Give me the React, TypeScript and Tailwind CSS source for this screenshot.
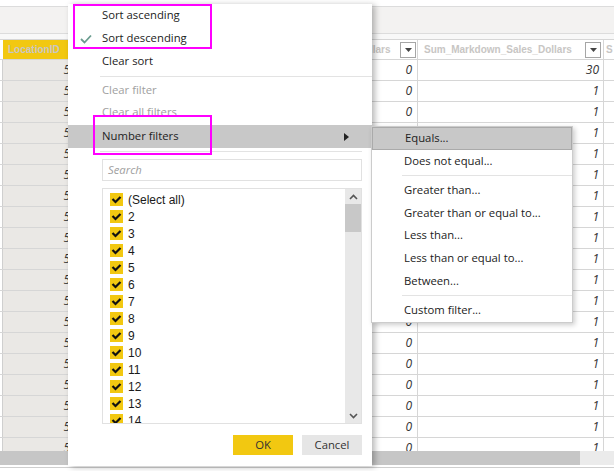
import React from "react";

const ROWS = Array.from({ length: 19 }, (_, i) => i);
const VALUES = ["(Select all)", "2", "3", "4", "5", "6", "7", "8", "9", "10", "11", "12", "13", "14"];

function DropBox() {
  return (
    <div className="w-[16px] h-[16px] border border-[#a6a6a6] bg-white flex items-center justify-center">
      <svg width="7" height="4" viewBox="0 0 7 4">
        <path d="M0 0 L7 0 L3.5 4 Z" fill="#444" />
      </svg>
    </div>
  );
}

function Check() {
  return (
    <div className="w-[13px] h-[13px] bg-[#f2c811] flex items-center justify-center">
      <svg width="11" height="9" viewBox="0 0 11 9">
        <path d="M1.5 4 L4.5 7 L9.5 2" stroke="#111" strokeWidth="2.2" fill="none" />
      </svg>
    </div>
  );
}

function Table() {
  return (
    <div className="flex flex-col">
      <div className="h-[7px] bg-white border-b border-[#dcdcdc]" />
      <div className="h-[27px] bg-[#f3f2f1] border-b border-[#dcdcdc]" />
      <div className="h-[5px] bg-[#f8f8f8]" />
      {/* header */}
      <div className="flex h-[21px] border-t border-b border-[#d6d6d6] font-['Liberation_Sans',Arial,sans-serif] text-[10px] font-bold text-[#c8c6c4]">
        <div className="w-[72px] flex items-center pl-[3px]">
          <div className="w-full h-full bg-[#f2c811] flex items-center pl-[5px]">LocationID</div>
        </div>
        <div className="w-[300px]" />
        <div className="w-[46px] flex items-center justify-between pr-[1px] border-r border-[#d6d6d6]">
          <span className="ml-[-2px]">llars</span>
          <DropBox />
        </div>
        <div className="w-[186px] flex items-center justify-between pl-[6px] pr-[2px] border-r border-[#d6d6d6]">
          <span>Sum_Markdown_Sales_Dollars</span>
          <DropBox />
        </div>
        <div className="flex-1 pl-[2px] flex items-center">S</div>
      </div>
      {/* body rows */}
      <div className="h-[391px] overflow-hidden flex flex-col font-['Open_Sans',sans-serif] text-[12px] italic text-[#333]">
        {ROWS.map((i) => (
          <div key={i} className="flex h-[21px] shrink-0 border-b border-[#d6d6d6]">
            <div className="w-[72px] pl-[2px]">
              <div className="h-full border-l border-[#cfcfcf] bg-[#eae8e5] text-right pr-[2px] leading-[20px]">5</div>
            </div>
            <div className="w-[300px]" />
            <div className="w-[46px] border-r border-[#d6d6d6] text-right pr-[5px] leading-[20px]">0</div>
            <div className="w-[186px] border-r border-[#d6d6d6] text-right pr-[4px] leading-[20px]">{i === 0 ? "30" : "1"}</div>
            <div className="flex-1" />
          </div>
        ))}
      </div>
      <div className="flex h-[14px]">
        <div className="w-[580px] bg-[#c6c6c6]" />
        <div className="flex-1 bg-[#ebebeb]" />
      </div>
      <div className="h-[3px] bg-white border-b border-[#cfcfcf]" />
    </div>
  );
}

function MenuItem({ label, disabled, active, check }: { label: string; disabled?: boolean; active?: boolean; check?: boolean }) {
  return (
    <div
      className={
        "h-[23px] flex items-center pl-[34px] relative " +
        (active ? "bg-[#c8c8c8] " : "") +
        (disabled ? "text-[#a0a0a0]" : "text-[#222]")
      }
    >
      {check && (
        <svg className="absolute left-[12px] top-[7px]" width="12" height="10" viewBox="0 0 12 10">
          <path d="M1 5 L4.5 8.5 L11 1.5" stroke="#6a9c8f" strokeWidth="1.8" fill="none" />
        </svg>
      )}
      {label}
      {active && (
        <svg className="absolute left-[276px] top-[8px]" width="5" height="8" viewBox="0 0 5 8">
          <path d="M0 0 L5 4 L0 8 Z" fill="#222" />
        </svg>
      )}
    </div>
  );
}

function Menu() {
  return (
    <div className="absolute left-[68px] top-[4px] w-[304px] h-[462px] bg-white shadow-[3px_1px_6px_rgba(0,0,0,0.28)] flex flex-col font-['Open_Sans',sans-serif] text-[11.3px]">
      <MenuItem label="Sort ascending" />
      <MenuItem label="Sort descending" check />
      <MenuItem label="Clear sort" />
      <div className="mt-[3px] mb-[2px] ml-[32px] h-px bg-[#e3e3e3]" />
      <div className="h-[22px] flex items-center pl-[34px] text-[#a0a0a0]">Clear filter</div>
      <div className="h-[22px] flex items-center pl-[34px] text-[#a0a0a0]">Clear all filters</div>
      <div className="mt-[2px]">
        <MenuItem label="Number filters" active />
      </div>
      <div className="mt-[3px] ml-[32px] mr-[10px] h-px bg-[#e3e3e3]" />
      <div className="mt-[7px] ml-[34px] w-[260px] h-[22px] border border-[#e1e1e1] flex items-center pl-[5px] italic text-[#a0a0a0]">
        Search
      </div>
      <div className="mt-[7px] ml-[34px] w-[260px] h-[236px] border border-[#e1e1e1] flex overflow-hidden">
        <div className="flex-1 pt-[2px] pl-[7px] font-['Liberation_Sans',Arial,sans-serif] text-[12px] text-[#1a1a1a] overflow-hidden">
          {VALUES.map((v) => (
            <div key={v} className="h-[17px] flex items-center gap-[5px] shrink-0">
              <Check />
              <span>{v}</span>
            </div>
          ))}
        </div>
        <div className="w-[16px] bg-[#e8e8e8] flex flex-col items-center">
          <svg className="mt-[5px]" width="9" height="6" viewBox="0 0 9 6">
            <path d="M1 5 L4.5 1.5 L8 5" stroke="#555" strokeWidth="1.6" fill="none" />
          </svg>
          <div className="mt-[4px] w-full h-[28px] bg-[#c8c8c8]" />
          <div className="flex-1" />
          <svg className="mb-[4px]" width="9" height="6" viewBox="0 0 9 6">
            <path d="M1 1 L4.5 4.5 L8 1" stroke="#555" strokeWidth="1.6" fill="none" />
          </svg>
        </div>
      </div>
      <div className="mt-[11px] ml-[165px] flex gap-[9px]">
        <div className="w-[60px] h-[20px] bg-[#f2c811] flex items-center justify-center text-[#333]">OK</div>
        <div className="w-[60px] h-[20px] bg-[#e6e6e6] flex items-center justify-center text-[#333]">Cancel</div>
      </div>
    </div>
  );
}

function SubItem({ label, active }: { label: string; active?: boolean }) {
  return (
    <div
      className={
        "h-[23px] flex items-center pl-[32px] text-[#222] " +
        (active ? "bg-[#c8c8c8] border border-[#aaaaaa] pl-[31px]" : "")
      }
    >
      {label}
    </div>
  );
}

function SubMenu() {
  return (
    <div className="absolute left-[371px] top-[126px] w-[202px] h-[197px] bg-white border border-[#cccccc] shadow-[2px_2px_5px_rgba(0,0,0,0.2)] flex flex-col font-['Open_Sans',sans-serif] text-[11.3px]">
      <SubItem label="Equals..." active />
      <SubItem label="Does not equal..." />
      <div className="my-[3px] ml-[30px] h-px bg-[#e3e3e3]" />
      <SubItem label="Greater than..." />
      <SubItem label="Greater than or equal to..." />
      <SubItem label="Less than..." />
      <SubItem label="Less than or equal to..." />
      <SubItem label="Between..." />
      <div className="my-[3px] ml-[30px] h-px bg-[#e3e3e3]" />
      <SubItem label="Custom filter..." />
    </div>
  );
}

export default function App() {
  return (
    <div className="relative w-[614px] h-[471px] overflow-hidden bg-white">
      <Table />
      <Menu />
      <SubMenu />
      <div className="absolute left-[73px] top-[4px] w-[139px] h-[45px] border-2 border-[#ff00ff]" />
      <div className="absolute left-[93px] top-[115px] w-[119px] h-[40px] border-2 border-[#ff00ff]" />
    </div>
  );
}
